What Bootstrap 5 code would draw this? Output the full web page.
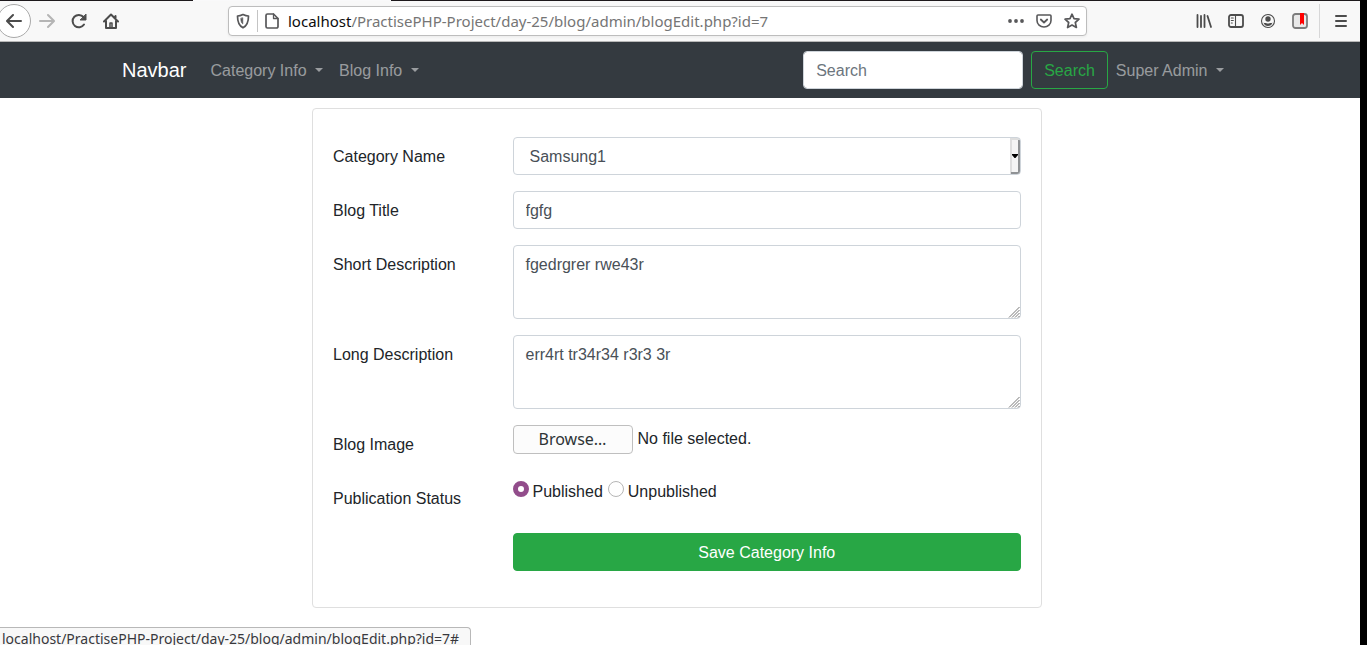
<!DOCTYPE html>
<html lang="en">
<head>
<meta charset="utf-8">
<meta name="viewport" content="width=device-width, initial-scale=1">
<title>Blog Edit</title>
<link href="https://cdn.jsdelivr.net/npm/bootstrap@5.3.0/dist/css/bootstrap.min.css" rel="stylesheet">
<style>
  body { font-family: "Liberation Sans", Arial, sans-serif; font-size: 16px; color: #212529; background: #fff; overflow: hidden; }
  .screen { min-height: 100vh; border-right: 7px solid #000; }

  /* browser toolbar */
  .tabs-edge { height: 1px; background: linear-gradient(to right, #1d191c 193px, #f9f9fa 193px, #f9f9fa 391px, #1d191c 391px); }
  .toolbar { height: 41px; padding-right: 3px; background: #f8f8f8; border-bottom: 1px solid #b8b8b8; }
  .tool { width: 32px; height: 34px; padding: 0; border: 0; background: none; color: #4c4c4c; display: flex; align-items: center; justify-content: center; flex: none; }
  .tool svg, .url-tool svg { width: 16px; height: 16px; fill: none; stroke: currentColor; stroke-width: 2; stroke-linecap: round; stroke-linejoin: round; }
  .tool-back { width: 34px; margin-left: -3px; border: 1px solid #a9a9a9; border-radius: 50%; background: #fff; }
  .tool:disabled { color: #b5b5b5; }
  .tool-sep { width: 1px; height: 34px; background: #d7d7d8; margin: 0 5px 0 3px; }
  .urlbar { height: 30px; margin: 0 101px; background: #fff; border: 1px solid #bdbdbd; border-radius: 4px; box-shadow: 0 1px 3px rgba(0,0,0,.06); min-width: 0; }
  .url-tool { width: 28px; height: 28px; padding: 0; border: 0; background: none; color: #58585a; display: flex; align-items: center; justify-content: center; flex: none; }
  .url-sep { width: 1px; height: 22px; background: #c4c4c4; }
  .url-text { font: 15px/28px "Noto Sans", sans-serif; color: #757575; padding-left: 2px; white-space: nowrap; overflow: hidden; }
  .url-text b { font-weight: 400; color: #0c0c0d; }

  /* page */
  .page { padding-right: 6px; }
  .page .container { --bs-gutter-x: 30px; }
  .page .row { --bs-gutter-x: 30px; }
  .site-nav { background: #343a40; padding: 8px 6px 8px 0; min-height: 56px; }
  .site-nav .container { --bs-gutter-x: 30px; padding: 0 15px; }
  .site-nav .navbar-brand { font-size: 20px; line-height: 30px; color: #fff; }
  .site-nav .nav-link { color: rgba(255,255,255,.5); }
  .search-box { width: 220px; }
  .form-control, .pick { border: 1px solid #ced4da; border-radius: 4px; color: #495057; }
  .form-control::placeholder { color: #6c757d; opacity: 1; }
  .btn { border-radius: 4px; }
  .form-control, .btn { padding: 7px 12px 5px; }
  .page .col-form-label { padding-top: 8px; padding-bottom: 6px; }
  .site-nav .nav-link { padding-top: 9px; padding-bottom: 7px; }
  .btn-find { color: #28a745; border-color: #28a745; }
  .btn-save { color: #fff; background: #28a745; border-color: #28a745; }
  .edit-card { margin-top: 10px; border: 1px solid #dfdfdf; border-radius: 4px; }
  .edit-card .card-body { padding: 28px 20px 20px; }
  .pick { width: 100%; height: 38px; padding: 7px 12px 5px 16px; appearance: none;
    background: #fff url("data:image/svg+xml,%3Csvg xmlns='http://www.w3.org/2000/svg' width='10' height='36'%3E%3Cpath fill='%23f4f4f4' d='M0 0h10v36H0z'/%3E%3Cpath fill='%23dedede' d='M0 0h10v2H2v34H0z'/%3E%3Cpath fill='%238f9294' d='M8 2h2v34H1v-2h7z'/%3E%3Cpath d='M2 16h6v1L5.500 20h-1L2 17z'/%3E%3C/svg%3E") right 0 top 0 no-repeat; }
  textarea.form-control { height: 74px; }
  textarea::-webkit-resizer { background: url("data:image/svg+xml,%3Csvg xmlns='http://www.w3.org/2000/svg' width='12' height='12'%3E%3Cpath stroke='%23777' d='M1 11.500 11.500 1M4 11.500 11.500 4M7 11.500 11.500 7M10 11.500l1.500-1.500'/%3E%3C/svg%3E") right bottom no-repeat; }
  .file-btn { width: 120px; height: 29px; font: 16px/27px "Noto Sans", sans-serif; text-align: center; color: #2e3436; background: #fcfcfc; border: 1px solid #bfbfbf; border-radius: 4px; }
  .file-name { margin-left: 5px; line-height: 28px; }
  .status-set { gap: 5px; padding-top: 1px; }
  .status-radio { appearance: none; width: 16px; height: 16px; margin: 1px 4px 0 0; border: 1px solid #b6b6b6; border-radius: 50%; background: #fff; }
  .status-radio:checked { border: 5px solid #924d8b; }
  .link-hint { position: fixed; left: 0; bottom: 0; height: 18px; padding: 0 11px 0 2px; overflow: hidden; background: #f8f8f8; border: 1px solid #b8b8b8; border-width: 1px 1px 0 0; border-radius: 0 4px 0 0; font: 14px/22px "Noto Sans", sans-serif; color: #38383d; white-space: nowrap; }
</style>
</head>
<body>
<div class="screen">
  <header>
    <div class="tabs-edge"></div>
    <div class="toolbar d-flex align-items-center">
      <button class="tool tool-back" aria-label="Back"><svg viewBox="0 0 16 16"><path d="M15 8H1.500M7 2 1 8l6 6"/></svg></button>
      <button class="tool" aria-label="Forward" disabled><svg viewBox="0 0 16 16"><path d="M1 8h13.500M9 2l6 6-6 6"/></svg></button>
      <button class="tool" aria-label="Reload"><svg viewBox="0 0 16 16"><path d="M13 11.500A6.200 6.200 0 1 1 12.500 4"/><path d="M15 1.500V7H9.500z" fill="currentColor" stroke-width="1"/></svg></button>
      <button class="tool" aria-label="Home"><svg viewBox="0 0 16 16"><path d="M1 8.500 8 1.500l7 7M3 8v7h10V8M12.500 5V3"/><path d="M7 14v-4h2v4" stroke-width="1.500"/></svg></button>

      <div class="urlbar d-flex align-items-center flex-grow-1">
        <button class="url-tool" aria-label="Site protection"><svg viewBox="0 0 16 16"><path d="M8 1.500C6 2.500 4 3 2.500 3c0 5.500 .8 9.500 5.500 11.800 4.700-2.300 5.500-6.300 5.500-11.800C12 3 10 2.500 8 1.500z" stroke-width="1.700"/><path d="M7.800 5v6C6.300 10 5.800 8 5.800 5.500z" fill="currentColor" stroke-width=".6"/></svg></button>
        <span class="url-sep"></span>
        <button class="url-tool" aria-label="Page information"><svg viewBox="0 0 16 16"><path d="M4 1h5.500L14 5.500v8a1.500 1.500 0 0 1-1.500 1.500h-9A1.500 1.500 0 0 1 2 13.500V2.500A1.500 1.500 0 0 1 3.500 1z" stroke-width="1.700"/><path d="M9.500 1v4.500H14" stroke-width="1.300"/></svg></button>
        <div class="url-text flex-grow-1"><b>localhost</b>/PractisePHP-Project/day-25/blog/admin/blogEdit.php?id=7</div>
        <button class="url-tool" aria-label="Page actions"><svg viewBox="0 0 16 16"><g fill="currentColor" stroke="none"><circle cx="2" cy="8" r="1.900"/><circle cx="8" cy="8" r="1.900"/><circle cx="14" cy="8" r="1.900"/></g></svg></button>
        <button class="url-tool" aria-label="Save to Pocket"><svg viewBox="0 0 16 16"><path d="M2 2h12q1 0 1 1v4.500a7 6.500 0 0 1-14 0V3q0-1 1-1z" stroke-width="1.600"/><path d="M4.800 6.500 8 9.500l3.200-3" stroke-width="1.800"/></svg></button>
        <button class="url-tool" aria-label="Bookmark"><svg viewBox="0 0 16 16"><path d="M8 1.200l2 4.500 5 .5-3.700 3.300 1.100 5L8 12l-4.400 2.500 1.100-5L1 6.200l5-.5z" stroke-width="1.700"/></svg></button>
      </div>

      <button class="tool" aria-label="Library"><svg viewBox="0 0 16 16"><path d="M1.500 2v12M5 3v11M8.500 2v12M11.500 3l3.500 11" stroke-width="1.800"/></svg></button>
      <button class="tool" aria-label="Sidebars"><svg viewBox="0 0 16 16"><rect x="1" y="2" width="14" height="12" rx="2" stroke-width="1.800"/><path d="M7.500 2v12M3.300 5h2M3.300 7.500h2M3.300 10h1" stroke-width="1.100"/></svg></button>
      <button class="tool" aria-label="Account"><svg viewBox="0 0 16 16"><circle cx="8" cy="8" r="6.500" stroke-width="1.100"/><circle cx="8" cy="6" r="2.700" fill="currentColor" stroke="none"/><path d="M3.500 9.500q1 .8 2.500.5 2 1 4 0 1.500.3 2.500-.5-1 3.500-4.500 3.500T3.500 9.500z" fill="currentColor" stroke="none"/></svg></button>
      <button class="tool" aria-label="Bookmarks extension"><svg viewBox="0 0 16 16"><rect x="1" y="1" width="14" height="14" rx="2.500" fill="#e9e9e9" stroke="#7d7d7d" stroke-width="1.800"/><path d="M8 0h4v12l-2-2-2 2z" fill="#f00" stroke="none"/></svg></button>
      <span class="tool-sep"></span>
      <button class="tool" aria-label="Menu"><svg viewBox="0 0 16 16"><path d="M3 3h10M3 8h10M3 13h10"/></svg></button>
    </div>
  </header>

  <nav class="navbar navbar-expand navbar-dark site-nav">
    <div class="container">
      <a class="navbar-brand" href="#">Navbar</a>
      <ul class="navbar-nav me-auto">
        <li class="nav-item dropdown"><a class="nav-link dropdown-toggle" href="#" role="button" data-bs-toggle="dropdown">Category Info </a></li>
        <li class="nav-item dropdown"><a class="nav-link dropdown-toggle" href="#" role="button" data-bs-toggle="dropdown">Blog Info </a></li>
      </ul>
      <form class="d-flex gap-2">
        <input class="form-control search-box" type="search" placeholder="Search" aria-label="Search">
        <button class="btn btn-find" type="button">Search</button>
      </form>
      <ul class="navbar-nav">
        <li class="nav-item dropdown"><a class="nav-link dropdown-toggle" href="#" role="button" data-bs-toggle="dropdown">Super Admin </a></li>
      </ul>
    </div>
  </nav>

  <main class="page">
    <div class="container">
      <div class="row">
        <div class="col-8 mx-auto">
          <div class="card edit-card">
            <form class="card-body">
              <div class="row mb-3">
                <label class="col-3 col-form-label" for="category">Category Name</label>
                <div class="col-9"><select class="pick d-block" id="category"><option>Samsung1</option></select></div>
              </div>
              <div class="row mb-3">
                <label class="col-3 col-form-label" for="title">Blog Title</label>
                <div class="col-9"><input class="form-control" id="title" type="text" value="fgfg"></div>
              </div>
              <div class="row mb-3">
                <label class="col-3 col-form-label" for="short">Short Description</label>
                <div class="col-9"><textarea class="form-control" id="short">fgedrgrer rwe43r</textarea></div>
              </div>
              <div class="row mb-3">
                <label class="col-3 col-form-label" for="long">Long Description</label>
                <div class="col-9"><textarea class="form-control" id="long">err4rt tr34r34 r3r3 3r</textarea></div>
              </div>
              <div class="row mb-3">
                <label class="col-3 col-form-label" for="image">Blog Image</label>
                <div class="col-9 d-flex align-items-start">
                  <input class="visually-hidden" id="image" type="file">
                  <label class="file-btn" for="image">Browse…</label>
                  <span class="file-name">No file selected.</span>
                </div>
              </div>
              <div class="row mb-3">
                <span class="col-3 col-form-label">Publication Status</span>
                <div class="col-9 d-flex align-items-start status-set">
                  <label class="d-flex"><input class="status-radio" type="radio" name="status" checked>Published</label>
                  <label class="d-flex"><input class="status-radio" type="radio" name="status">Unpublished</label>
                </div>
              </div>
              <div class="row mb-3">
                <div class="col-9 offset-3"><button class="btn btn-save w-100" type="button">Save Category Info</button></div>
              </div>
            </form>
          </div>
        </div>
      </div>
    </div>
  </main>

  <div class="link-hint">localhost/PractisePHP-Project/day-25/blog/admin/blogEdit.php?id=7#</div>
</div>
<script src="https://cdn.jsdelivr.net/npm/bootstrap@5.3.0/dist/js/bootstrap.bundle.min.js"></script>
</body>
</html>
